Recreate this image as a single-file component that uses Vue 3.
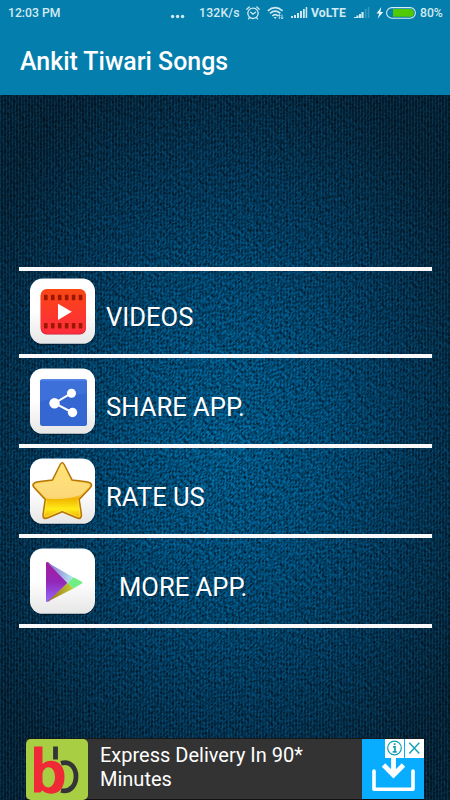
<script setup>
const items = [
  { id: 'videos', label: 'VIDEOS' },
  { id: 'share', label: 'SHARE APP.' },
  { id: 'rate', label: 'RATE US' },
  { id: 'more', label: 'MORE APP.' },
]
const holes = [0, 1, 2, 3, 4, 5]
</script>

<template>
  <div class="screen">
    <header class="top">
      <div class="status">
        <span class="time">12:03 PM</span>
        <svg class="dots" width="16" height="5" viewBox="0 0 16 5" fill="#cfe9f2"><circle cx="2.6" cy="2.5" r="1.7" /><circle cx="7.6" cy="2.5" r="1.7" /><circle cx="12.6" cy="2.5" r="1.7" /></svg>
        <span class="speed">132K/s</span>
        <svg class="alarm" width="14" height="14" viewBox="0 0 14 14" fill="none" stroke="#cfe9f2" stroke-width="1.3" stroke-linecap="round"><circle cx="7" cy="7.3" r="5.2" /><path d="M.8 3.2 3.2 1M13.2 3.2 10.8 1M4.7 6.2 7 8.2l2.5-2M3.5 11.7l-1 1.2M10.5 11.7l1 1.2" /></svg>
        <svg class="wifi" width="17" height="14" viewBox="0 0 17 14" fill="none" stroke="#cfe9f2" stroke-width="1.6"><path d="M.8 4.8Q8.2-1.5 15.6 4.8M3 7.4Q8.2 3 13.4 7.4M5.3 9.9Q8.2 7.2 11.1 9.9" /><path d="M6.6 11h3.2L8.2 13z" fill="#cfe9f2" stroke="none" /><path d="M12.3 13V8.5M11 10l1.3-1.5 1.1 1.5M15 8.5V13M13.9 11.5l1.1 1.4 1.2-1.4" stroke-width=".9" /></svg>
        <svg class="signal" width="17" height="12" viewBox="0 0 17 12" fill="#cfe9f2"><path d="M0 9h2v2H0zM3 8h2v3H3zM6 6h2v5H6zM9 4h2v7H9zM12 2h1.8v9H12zM14.7 0h1.5v11h-1.5z" /></svg>
        <span class="volte">VoLTE</span>
        <svg class="signal2" width="17" height="12" viewBox="0 0 17 12" fill="#cfe9f2"><path d="M0 10h2.4v1H0zM2.4 8.6h2.2V11H2.4zM5 7h2v4H5zM7.4 5h2.2v6H7.4z" /><path d="M10.8 2h1.7v9h-1.7zM13.8 0h1.5v11h-1.5z" opacity=".25" /></svg>
        <svg class="battery" width="40" height="14" viewBox="0 0 40 14"><path d="M5.3 1 .5 7.4h2.7L1.6 12.7 7.2 6H4.4z" fill="#e5f4f8" /><rect x="10.6" y="1.6" width="28.8" height="10.6" rx="5.3" fill="none" stroke="#d5edf4" stroke-width="1.1" /><path d="M17 3h17a3.9 3.9 0 0 1 0 7.8H17z" fill="#4fc900" /></svg>
        <span class="percent">80%</span>
      </div>
      <h1>Ankit Tiwari Songs</h1>
    </header>
    <main>
      <svg class="fabric" width="450" height="705" aria-hidden="true">
        <filter id="weave" x="0" y="0" width="100%" height="100%" color-interpolation-filters="sRGB">
          <feTurbulence type="fractalNoise" baseFrequency=".36 .66" numOctaves="1" seed="8" />
          <feColorMatrix values="0 0 0 0 0  0 0 0 0 .03  0 0 0 0 .06  3.2 0 0 0 -1.15" />
        </filter>
        <pattern id="ribs" width="3" height="3" patternUnits="userSpaceOnUse"><path d="M0 0h1v3H0z" fill="#0b87c2" opacity=".17" /></pattern>
        <g transform="rotate(-45 225 352)"><rect x="-225" y="-100" width="900" height="905" filter="url(#weave)" opacity=".72" /></g>
        <rect width="450" height="705" fill="url(#ribs)" />
      </svg>
      <nav>
        <a v-for="item in items" :key="item.id" class="row" :class="item.id">
          <svg class="icon" width="67" height="68" viewBox="0 0 67 68">
            <defs>
              <linearGradient id="tile" x2="0" y2="1"><stop offset=".5" stop-color="#fff" /><stop offset="1" stop-color="#e6e6e6" /></linearGradient>
              <linearGradient id="red" x2="0" y2="1"><stop stop-color="#fa4614" /><stop offset="1" stop-color="#ff2d3e" /></linearGradient>
              <linearGradient id="gold" x2="0" y2="1"><stop stop-color="#ffe27a" /><stop offset=".58" stop-color="#f6bd35" /><stop offset=".65" stop-color="#f2b500" /><stop offset=".83" stop-color="#ffed19" /><stop offset="1" stop-color="#eba600" /></linearGradient>
              <linearGradient id="shine" x2="0" y2="1"><stop stop-color="#ffe46e" /><stop offset="1" stop-color="#ffe6a0" stop-opacity=".85" /></linearGradient>
              <linearGradient id="purple" x2="0" y2="1"><stop stop-color="#a51b9b" /><stop offset=".5" stop-color="#9328b8" /><stop offset="1" stop-color="#9368ff" /></linearGradient>
              <linearGradient id="sky"><stop stop-color="#8067cb" /><stop offset="1" stop-color="#b9e9f2" /></linearGradient>
              <linearGradient id="olive"><stop stop-color="#9e6512" /><stop offset="1" stop-color="#bfd239" /></linearGradient>
            </defs>
            <rect x="1" y="2" width="65" height="65" rx="12.5" fill="#000b16" opacity=".45" />
            <rect x="1" y=".5" width="65" height="65.3" rx="12.5" fill="url(#tile)" />
            <g v-if="item.id === 'videos'">
              <rect x="11.7" y="12" width="45.2" height="44.5" rx="6" fill="#c51e2c" /><rect x="11.7" y="11" width="45.2" height="44.7" rx="6" fill="url(#red)" />
              <g fill="#981900"><template v-for="n in holes" :key="n"><rect :x="15 + n * 6.95" y="16.8" width="3.6" height="5.4" rx=".6" /><rect :x="15 + n * 6.95" y="45" width="3.6" height="5.4" rx=".6" /></template></g>
              <path d="M29 25.7 42.8 33.8 29 42z" fill="#fff" />
            </g>
            <g v-else-if="item.id === 'share'">
              <rect x="11" y="11.3" width="47" height="46.8" rx="2.5" fill="#3467d2" /><path d="M11 33V13.3q0-2 2-2h43q2 0 2 2v12z" fill="#467add" opacity=".5" /><path d="M12 12.1h45" stroke="#5488ed" />
              <path d="M42.5 25.2 25.5 35.2 43.5 44.5" fill="none" stroke="#fff" stroke-width="2" /><g fill="#fff"><circle cx="42.5" cy="25.2" r="4.5" /><circle cx="25.5" cy="35.2" r="5.2" /><circle cx="43.5" cy="44.5" r="4.7" /></g>
            </g>
            <g v-else-if="item.id === 'rate'" stroke-linejoin="round">
              <path d="M31.2 6.5Q33.2 3 35.2 6.5L43 21.9 57.5 23.8Q65.3 25.2 61 30L50.2 41.5 52.5 56.8Q52.5 62.2 47.5 59.8L33.2 53.8 19 59.8Q13.8 62.2 14 56.8L16.2 41.5 5.5 30Q1.2 25.2 8.8 23.8L23.5 21.9z" fill="url(#gold)" stroke="#b77508" stroke-width="1.5" />
              <path d="M32 7.5Q33.2 5.2 34.4 7.5L42.1 23.1 57.5 25.2Q62.2 26.2 60 29L51.6 37Q36 42.5 17.2 40.5L6.5 29Q4.2 26.2 9 25.2L24.3 23.1z" fill="url(#shine)" opacity=".78" />
              <path d="M17.6 42.5 15.5 57Q15.8 59.4 18 58.5L33.2 52.2 48.5 58.5Q50.8 59.3 50.9 57L48.8 41.5" fill="none" stroke="#ffe458" stroke-width=".7" />
            </g>
            <g v-else>
              <path d="M17 14.5q1-1.1 3 .2L38.5 35 20.5 53Q18 54.8 17 53.2z" fill="url(#purple)" /><path d="M18 14.3 44.3 29.2 38.5 35z" fill="url(#sky)" /><path d="M38.5 35 44.3 29.2 52.4 33.5q2 1 0 2.3l-8 4.7z" fill="#71ee83" /><path d="M18.3 53.7 38.5 35 44.5 40.5z" fill="url(#olive)" />
            </g>
          </svg>
          <span class="label">{{ item.label }}</span>
        </a>
      </nav>
      <aside class="ad">
        <svg class="logo" width="62" height="61" viewBox="0 0 62 61"><rect width="62" height="61" rx="5" fill="#a8cf43" /><path d="M29.5 7.5v13" stroke="#343338" stroke-width="4.8" /><path d="M35 24.2C54.5 18.5 55.5 55.5 35 51.5" fill="none" stroke="#343338" stroke-width="4.8" /><path fill-rule="evenodd" d="M8 7.5h8.5V25C22 19.5 38.5 19.5 38.5 38S23 57.5 16.5 51.5L14 53.5H8zM16.5 34v9C18.5 51.5 29 50 29 38S18.5 25.5 16.5 34z" fill="#ef2935" /></svg>
        <p>Express Delivery In 90*<br>Minutes</p>
        <div class="download">
          <svg width="62" height="60" viewBox="0 0 62 60"><path d="M12 32v18.3h39V32" fill="none" stroke="#fff" stroke-width="3.6" stroke-linecap="round" stroke-linejoin="round" /><path d="M31.5 17v19M21.5 26l10 10 10-10" fill="none" stroke="#fff" stroke-width="4.8" /><path d="M23 0h19v19H23zM43 0h19v19H43z" fill="#fff" /><circle cx="32.5" cy="9" r="6.8" fill="none" stroke="#10a0b5" stroke-width="1.2" /><path d="M32.7 4.3v1.8M31 7.9h2v5M30.7 12.9h4" fill="none" stroke="#10a0b5" stroke-width="1.7" /><path d="m47.3 3.8 10 10.8m0-10.8-10 10.8" stroke="#10a0b5" stroke-width="1.4" /></svg>
        </div>
      </aside>
    </main>
  </div>
</template>

<style>
body { margin: 0; }
</style>

<style scoped>
* { box-sizing: border-box; }
.screen { width: 450px; height: 800px; overflow: hidden; display: flex; flex-direction: column; font-family: Roboto, sans-serif; }
.top { height: 95px; flex: none; background: #047eac; color: #fff; }
.status { height: 26px; padding: 0 0 0 8px; display: flex; align-items: center; color: #d2eaf2; font-size: 12.2px; line-height: 26px; font-weight: 500; white-space: nowrap; }
.status > * { flex: none; }
.time { width: 162px; }
.dots { margin-top: 6px; margin-right: 13px; }
.speed { width: 47px; letter-spacing: .2px; }
.alarm { margin-right: 7px; }
.wifi { margin-right: 7px; }
.signal { margin-right: 3px; }
.volte { width: 43px; letter-spacing: .15px; font-weight: 700; }
.signal2 { margin-right: 5px; }
.battery { margin-right: 4px; }
h1 { margin: 0; padding: 19px 20px 0; font-size: 24.9px; line-height: 34px; font-weight: 500; }
main { height: 705px; display: flex; flex-direction: column; position: relative; isolation: isolate; background: radial-gradient(ellipse 285px 400px at 50% 50%, #0074b0 0%, #005f94 35%, #04436b 65%, #08273c 100%); }
.fabric { position: absolute; inset: 0; z-index: -1; }
nav { margin: 172px 18px 0 18.5px; border-top: 4px solid #f9f9fb; }
.row { height: 90px; display: flex; border-bottom: 4px solid #f9f9fb; padding: 10px 0 0 10.5px; color: #fff; }
.row:first-child { height: 86.5px; padding-top: 6.5px; }
.icon { flex: none; }
.label { margin: 22px 0 0 10px; font-size: 25.6px; line-height: 34px; white-space: pre; text-shadow: 1px 1px 0 #00152a44; }
.more .label { margin-left: 23px; }
.ad { margin: auto 26px 0; height: 62px; display: flex; background: #333; border-top: 1px solid #17191b; border-bottom: 1px solid #111; color: #fff; }
.logo { flex: none; }
.ad p { margin: 4px 0 0 12px; width: 262px; font-size: 20px; line-height: 24px; white-space: nowrap; }
.download { width: 62px; height: 60px; background: #08adff; }
.download svg { display: block; }
</style>
